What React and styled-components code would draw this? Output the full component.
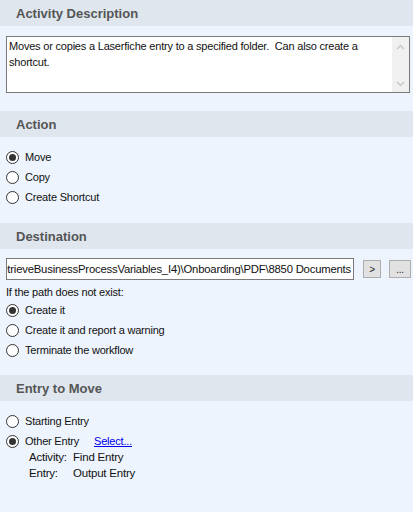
import styled, { createGlobalStyle } from "styled-components";

const GlobalStyle = createGlobalStyle`
  html, body {
    margin: 0;
    padding: 0;
    background: #edf4fd;
  }
  body {
    font-family: "Liberation Sans", Arial, sans-serif;
    font-size: 11px;
    letter-spacing: -0.2px;
    color: #111;
  }
`;

const Page = styled.div`
  width: 413px;
  height: 512px;
  background: #edf4fd;
  display: flex;
  flex-direction: column;
  overflow: hidden;
`;

const Header = styled.div`
  height: 26px;
  flex-shrink: 0;
  display: flex;
  align-items: center;
  padding-left: 16px;
  background: #dfe6ee;
  color: #555;
  font-weight: bold;
  font-size: 13px;
  letter-spacing: 0;
  margin-top: ${(p) => p.$gap || 0}px;
`;

const Body = styled.div`
  padding: ${(p) => p.$pad || "10px 0 15px 6px"};
  display: flex;
  flex-direction: column;
`;

const TextBox = styled.div`
  height: 55px;
  margin-right: 3px;
  border: 1px solid #7a7a7a;
  background: #fff;
  display: flex;
`;

const TextContent = styled.div`
  flex: 1;
  padding: 1px 2px;
  line-height: 16px;
`;

const ScrollBar = styled.div`
  width: 17px;
  background: #f0f0f0;
  display: flex;
  flex-direction: column;
  justify-content: space-between;
  align-items: center;
  padding: 7px 0 5px;
`;

const RadioRow = styled.label`
  height: 20px;
  display: flex;
  align-items: center;
  gap: 6px;
`;

const Circle = styled.span`
  width: 11px;
  height: 11px;
  flex-shrink: 0;
  border: 1px solid #333;
  border-radius: 50%;
  background: #fff;
  display: flex;
  align-items: center;
  justify-content: center;

  &::after {
    content: "";
    width: 7px;
    height: 7px;
    border-radius: 50%;
    background: ${(p) => (p.$on ? "#333" : "transparent")};
  }
`;

const PathRow = styled.div`
  display: flex;
  align-items: center;
  height: 22px;
  margin-bottom: 4px;
`;

const PathInput = styled.div`
  width: 344px;
  height: 20px;
  border: 1px solid #7a7a7a;
  background: #fff;
  display: flex;
  align-items: center;
  justify-content: flex-end;
  overflow: hidden;
  white-space: nowrap;
  padding-right: 2px;
  font-size: 11.3px;
`;

const SmallButton = styled.div`
  width: ${(p) => p.$w}px;
  height: 16px;
  margin-left: ${(p) => p.$ml}px;
  border: 1px solid #adadad;
  background: #e1e1e1;
  display: flex;
  align-items: center;
  justify-content: center;
  font-size: 10px;
  color: #222;
`;

const Label = styled.div`
  height: 16px;
  display: flex;
  align-items: center;
`;

const LinkText = styled.a`
  color: #0000ee;
  text-decoration: underline;
  margin-left: 9px;
  cursor: pointer;
`;

const Detail = styled.div`
  display: grid;
  grid-template-columns: 44px auto;
  padding-left: 23px;
  line-height: 16px;
  margin-top: -2px;
  font-size: 11.5px;
`;

const Radio = ({ on, children, extra }) => (
  <RadioRow>
    <Circle $on={on} />
    {children}
    {extra}
  </RadioRow>
);

export default function App() {
  return (
    <Page>
      <GlobalStyle />
      <Header>Activity Description</Header>
      <Body $pad="10px 0 17px 6px">
        <TextBox>
          <TextContent>
            Moves or copies a Laserfiche entry to a specified folder.&nbsp; Can also create a shortcut.
          </TextContent>
          <ScrollBar>
            <svg width="9" height="6" viewBox="0 0 9 6">
              <path d="M1 5 L4.5 1.5 L8 5" fill="none" stroke="#c2c2c2" strokeWidth="1.2" />
            </svg>
            <svg width="9" height="6" viewBox="0 0 9 6">
              <path d="M1 1 L4.5 4.5 L8 1" fill="none" stroke="#c2c2c2" strokeWidth="1.2" />
            </svg>
          </ScrollBar>
        </TextBox>
      </Body>

      <Header $gap={1}>Action</Header>
      <Body>
        <Radio on>Move</Radio>
        <Radio>Copy</Radio>
        <Radio>Create Shortcut</Radio>
      </Body>

      <Header $gap={1}>Destination</Header>
      <Body $pad="9px 0 15px 6px">
        <PathRow>
          <PathInput>%(RetrieveBusinessProcessVariables_I4)\Onboarding\PDF\8850 Documents</PathInput>
          <SmallButton $w={16} $ml={9}>&gt;</SmallButton>
          <SmallButton $w={20} $ml={8}>...</SmallButton>
        </PathRow>
        <Label>If the path does not exist:</Label>
        <Radio on>Create it</Radio>
        <Radio>Create it and report a warning</Radio>
        <Radio>Terminate the workflow</Radio>
      </Body>

      <Header>Entry to Move</Header>
      <Body>
        <Radio>Starting Entry</Radio>
        <Radio on extra={<LinkText>Select...</LinkText>}>
          Other Entry
        </Radio>
        <Detail>
          <span>Activity:</span>
          <span>Find Entry</span>
          <span>Entry:</span>
          <span>Output Entry</span>
        </Detail>
      </Body>
    </Page>
  );
}
